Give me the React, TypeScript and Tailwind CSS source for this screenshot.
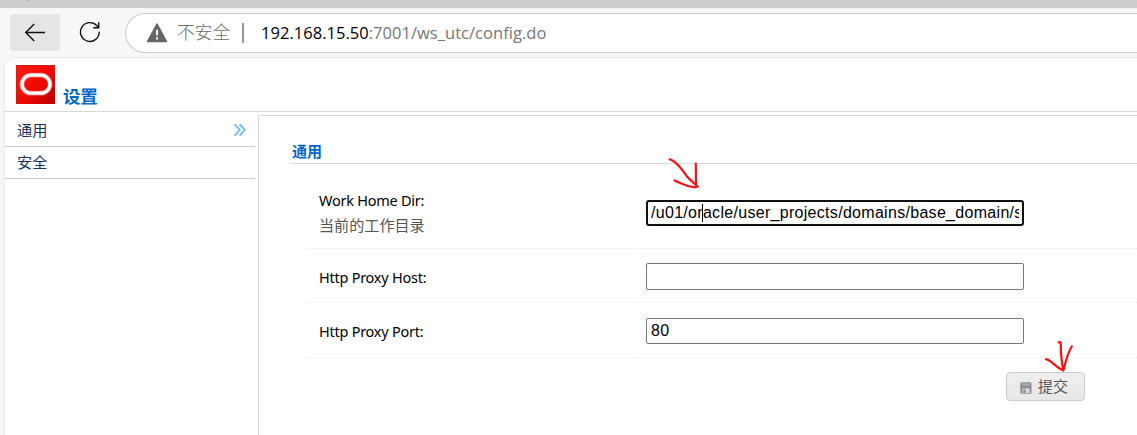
import React from 'react';

function Toolbar() {
  return (
    <div className="flex h-[49px] shrink-0 items-start bg-[#f7f7f7] pl-[10px] pt-[5px]">
      <button className="mt-px flex h-[37px] w-[50px] shrink-0 items-center justify-center rounded-[4px] bg-[#e5e5e5]">
        <svg width="22" height="20" viewBox="0 0 22 20" fill="none" stroke="#111" strokeWidth="1.4">
          <path d="M21 9.5H1.8M10.2 1L1.7 9.5L10.2 18" />
        </svg>
      </button>
      <svg className="ml-[19px] mt-[8px] shrink-0" width="22" height="22" viewBox="0 0 22 22" fill="none" stroke="#111" strokeWidth="1.4">
        <path d="M20.3 10.8A9.4 9.4 0 1 1 17.8 4.6L19.5 6.5M19.7 1.3V6.7H14.2" />
      </svg>
      <div className="ml-[24px] flex h-[40px] flex-1 items-center rounded-l-full border border-r-0 border-[#cbcbcb] bg-white pl-[20px]">
        <svg className="shrink-0" width="22" height="20" viewBox="0 0 22 20">
          <path d="M11 1.2L20.3 18.5H1.7Z" fill="#666" stroke="#666" strokeWidth="1.6" strokeLinejoin="round" />
          <path d="M11 6.8V12.6M11 14.3V16.4" stroke="#fff" strokeWidth="1.9" />
        </svg>
        <span className="-mt-[2px] ml-[9px] w-[54px] whitespace-nowrap text-[17.7px] font-light leading-[24px] text-[#6b6b6b]">不安全</span>
        <span className="ml-[11px] h-[20px] w-[2px] bg-[#949494]" />
        <span className="ml-[17px] whitespace-nowrap font-['Open_Sans','Noto_Sans',sans-serif] text-[16.5px] leading-[24px] tracking-[0.03px] text-[#767676]">
          <span className="text-black">192.168.15.50</span>:7001/ws_utc/config.do
        </span>
      </div>
    </div>
  );
}

function Logo() {
  return (
    <svg className="shrink-0" width="39" height="39" viewBox="0 0 39 39">
      <defs>
        <linearGradient id="red" x1="0" y1="0" x2="1" y2="1">
          <stop offset="0" stopColor="#fb1d15" />
          <stop offset=".55" stopColor="#ee0903" />
          <stop offset="1" stopColor="#b90000" />
        </linearGradient>
      </defs>
      <rect width="39" height="39" fill="url(#red)" />
      <path d="M.5 39V.5H39" fill="none" stroke="#d91710" />
      <rect x="6" y="10.2" width="28" height="18" rx="9" fill="none" stroke="#ffb5ae" strokeWidth="4.8" opacity=".55" />
      <rect x="6" y="10.2" width="28" height="18" rx="9" fill="none" stroke="#fff" strokeWidth="3.3" />
    </svg>
  );
}

function Field({ label, hint, height, pad, children }: { label: string; hint?: string; height: string; pad: string; children: React.ReactNode }) {
  return (
    <div className={`flex ${height}`}>
      <div className={`w-[327px] shrink-0 border-b border-dotted border-[#e9e9e9] pl-[12px] ${pad}`}>
        <div className="whitespace-nowrap text-[14.5px] leading-[25px] tracking-[-0.25px] text-black">{label}</div>
        {hint && <div className="whitespace-nowrap text-[15.1px] leading-[25px] text-[#555]">{hint}</div>}
      </div>
      <div className="ml-px flex flex-1 items-start border-b border-dotted border-[#e9e9e9] pl-[11px]">{children}</div>
    </div>
  );
}

export default function App() {
  return (
    <div className="relative flex h-[435px] w-[1137px] flex-col overflow-hidden bg-[#f7f7f7] font-['Noto_Sans','Noto_Sans_CJK_SC',sans-serif]">
      <div className="flex h-[8px] shrink-0 items-start bg-[#cdcdcd] pl-[26px]">
        <span className="h-px w-[4px] rounded-b bg-[#b5b5b5]" />
      </div>
      <Toolbar />
      <main className="ml-[4px] flex flex-1 flex-col rounded-tl-[10px] border-l border-t border-[#e9e9e9] bg-white">
        <header className="flex h-[54px] shrink-0 items-start border-b border-[#d9d9d9] pl-[11px] pt-[7px]">
          <Logo />
          <h1 className="ml-[8px] mt-[18px] text-[17.5px] font-bold leading-[26px] tracking-[-0.3px] text-[#0066cc]">设置</h1>
        </header>
        <div className="flex flex-1">
          <nav className="w-[250px] shrink-0 text-[15.2px] text-[#16325c]">
            <div className="flex h-[35px] items-center justify-between border-b border-[#cfcfcf] pl-[12px] pr-[8px] pt-[2px]">
              <span>通用</span>
              <svg width="14" height="14" viewBox="0 0 14 14" fill="none" stroke="#79bfee" strokeWidth="2">
                <path d="M1.5 1.2L6.8 6.8L1.5 12.6M6.6 1.2L11.9 6.8L6.6 12.6" />
              </svg>
            </div>
            <div className="flex h-[32px] items-center border-b border-[#cfcfcf] pl-[12px]">安全</div>
          </nav>
          <section className="ml-[3px] mt-[3px] flex flex-1 flex-col border-l border-t border-[#d9d9d9] pl-[31px] pt-[23px]">
            <h2 className="h-[25px] border-b border-[#d9d9d9] pl-[2px] text-[15px] font-bold leading-[24px] text-[#0066cc]">通用</h2>
            <form className="ml-[17px]" onSubmit={(e) => e.preventDefault()}>
              <Field label="Work Home Dir:" hint="当前的工作目录" height="h-[85px]" pad="pt-[24px]">
                <div className="mt-[36px] flex h-[26px] w-[378px] items-center rounded-[3px] border-2 border-[#101010] bg-white px-[3px]">
                  <div className="relative w-[369px] overflow-hidden whitespace-nowrap font-['Liberation_Sans',sans-serif] text-[16px] leading-[20px] tracking-[0.3px] text-black">
                    /u01/oracle/user_projects/domains/base_domain/s
                    <span className="absolute left-[51px] top-px h-[18px] w-px bg-black" />
                  </div>
                </div>
              </Field>
              <Field label="Http Proxy Host:" height="h-[54px]" pad="pt-[16px]">
                <input aria-label="Http Proxy Host" className="mt-[14px] h-[27px] w-[378px] rounded-[2px] border border-[#767676] bg-white px-[4px] outline-none" />
              </Field>
              <Field label="Http Proxy Port:" height="h-[55px]" pad="pt-[16px]">
                <input aria-label="Http Proxy Port" defaultValue="80" className="mt-[15px] h-[26px] w-[378px] rounded-[2px] border border-[#767676] bg-white px-[4px] font-['Liberation_Sans',sans-serif] text-[16px] tracking-[0.3px] text-black outline-none" />
              </Field>
              <button className="ml-[699px] mt-[14px] flex h-[29px] w-[79px] items-center rounded-[4px] border border-[#cccccc] bg-linear-to-b from-[#efefef] to-[#e7e7e7] pl-[13px] text-[15px] text-[#555]">
                <svg className="mt-[2px]" width="12" height="12" viewBox="0 0 12 12">
                  <rect x=".3" y=".3" width="11.2" height="11.4" rx="1.5" fill="#8b8b8b" />
                  <path d="M2.2 1.2H9.8V4.2H2.2Z" fill="#a9a9a9" />
                  <path d="M2.4 6.4H9.6V11H2.4Z" fill="#dedede" />
                  <path d="M3.4 7.2H5.5V11H3.4Z" fill="#8b8b8b" />
                </svg>
                <span className="ml-[6px]">提交</span>
              </button>
            </form>
          </section>
        </div>
      </main>
      <svg className="pointer-events-none absolute left-[666px] top-[155px]" width="36" height="38" viewBox="0 0 36 38" fill="none" stroke="#fb0d10" strokeWidth="2.2" strokeLinecap="round" strokeLinejoin="round">
        <path d="M3.7 4.3L6 5.2C13 9 17 16 21 21.5C25 26 29 29 31.8 31.5M29.8 8.5L30 31M8.5 25.5C15 28.5 22 31.8 29 32.3L31.8 31.5" />
      </svg>
      <svg className="pointer-events-none absolute left-[1042px] top-[338px]" width="36" height="38" viewBox="0 0 36 38" fill="none" stroke="#fb0d10" strokeWidth="2.2" strokeLinecap="round" strokeLinejoin="round">
        <path d="M16.5 4.3H18.7C18.8 14 19.2 23 21.4 32.5C23.5 24 25.5 15 29.8 8.5M4 21.2C10 22.5 13 29 21.4 32.5" />
      </svg>
    </div>
  );
}
